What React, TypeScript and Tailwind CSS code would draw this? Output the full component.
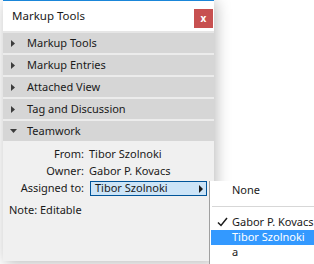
import React from "react";

const sections = ["Markup Tools", "Markup Entries", "Attached View", "Tag and Discussion"];

const menuItems = [
  { label: "Gabor P. Kovacs", checked: true, active: false },
  { label: "Tibor Szolnoki", checked: false, active: true },
  { label: "a", checked: false, active: false },
];

const Arrow = ({ open }: { open?: boolean }) =>
  open ? (
    <svg width="7" height="4" viewBox="0 0 7 4" className="ml-[7px] mr-[10px]">
      <path d="M0 0h7L3.5 4z" fill="#3c3c3c" />
    </svg>
  ) : (
    <svg width="4" height="7" viewBox="0 0 4 7" className="ml-[8px] mr-[12px]">
      <path d="M0 0l4 3.5L0 7z" fill="#3c3c3c" />
    </svg>
  );

const Field = ({ label, children }: { label: string; children: React.ReactNode }) => (
  <div className="flex items-center h-[17px]">
    <span className="w-[81px] text-right">{label}</span>
    {children}
  </div>
);

export default function App() {
  return (
    <div
      className="relative w-[314px] h-[264px] bg-white overflow-hidden text-[11px] text-[#1a1a1a]"
      style={{ fontFamily: '"Noto Sans", "Open Sans", sans-serif' }}
    >
      <div className="ml-[3px] w-[211px] h-[261px] bg-[#f0f0f0] shadow-[2px_2px_14px_rgba(0,0,0,0.28)] flex flex-col">
        <div className="h-[31px] bg-white border-t border-[#1a86d9] flex items-center justify-between pl-[9px] pr-[1px]">
          <span className="text-[11.5px]">Markup Tools</span>
          <button className="w-[19px] h-[19px] bg-[#c75050] text-white text-[10px] font-bold leading-none flex items-center justify-center mt-[4px]">
            x
          </button>
        </div>
        <div className="h-[2px] bg-[#e6e6e6]" />
        <div className="flex flex-col gap-[2px] bg-[#ececec]">
          {sections.map((s) => (
            <div key={s} className="h-[20px] bg-[#d6d6d6] flex items-center">
              <Arrow />
              <span>{s}</span>
            </div>
          ))}
          <div className="h-[20px] bg-[#d6d6d6] flex items-center">
            <Arrow open />
            <span>Teamwork</span>
          </div>
        </div>
        <div className="flex flex-col pt-[5px]">
          <Field label="From:">
            <span className="ml-[5px]">Tibor Szolnoki</span>
          </Field>
          <Field label="Owner:">
            <span className="ml-[5px]">Gabor P. Kovacs</span>
          </Field>
          <Field label="Assigned to:">
            <div className="ml-[6px] w-[117px] h-[15px] bg-[#cce4f7] border border-[#005499] flex items-center justify-between pl-[4px] pr-[3px]">
              <span>Tibor Szolnoki</span>
              <svg width="4" height="8" viewBox="0 0 4 8">
                <path d="M0 0l4 4L0 8z" fill="#1a1a1a" />
              </svg>
            </div>
          </Field>
          <div className="pl-[6px] mt-[5px] h-[17px] flex items-center">Note: Editable</div>
        </div>
      </div>

      <div className="absolute left-[209px] top-[181px] w-[110px] h-[90px] bg-white border-l border-[#a0a0a0] pt-[2px] whitespace-nowrap">
        <div className="h-[15px] flex items-center pl-[22px]">None</div>
        <div className="h-[17px] flex items-center pl-[2px]">
          <div className="h-px w-full bg-[#d7d7d7]" />
        </div>
        {menuItems.map((m) => (
          <div
            key={m.label}
            className={`relative h-[15px] flex items-center pl-[21px] ml-[1px] ${m.active ? "bg-[#3399ff] text-white" : ""}`}
          >
            {m.checked && (
              <svg width="11" height="10" viewBox="0 0 11 10" className="absolute left-[6px] top-[2px]">
                <path d="M1 5.5l3 3L10 1" stroke="#1a1a1a" strokeWidth="1.5" fill="none" />
              </svg>
            )}
            {m.label}
          </div>
        ))}
      </div>
    </div>
  );
}
